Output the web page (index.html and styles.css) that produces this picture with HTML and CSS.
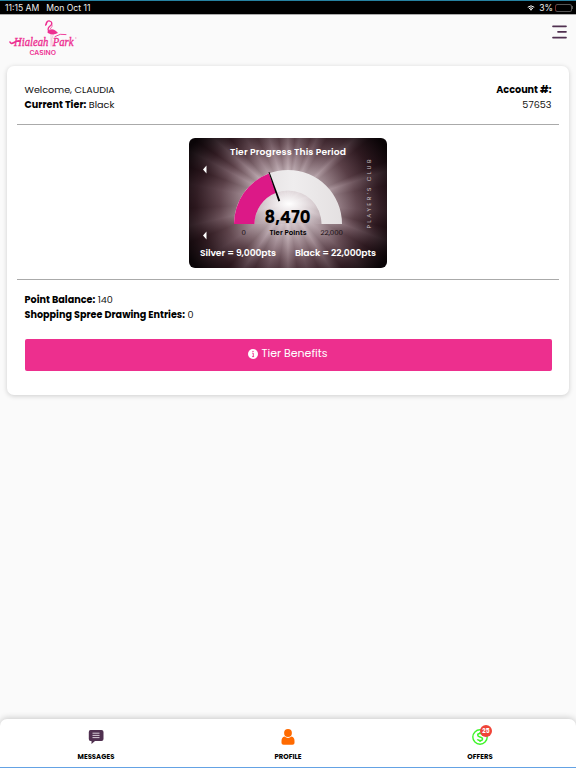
FILE: index.html
```html
<!DOCTYPE html>
<html lang="en">
<head>
  <meta charset="UTF-8">
  <meta name="viewport" content="width=device-width, initial-scale=1">
  <title>Hialeah Park Casino</title>
  <link rel="stylesheet" href="styles.css">
</head>
<body>

  <div class="status-bar">
    <span class="status-time">11:15 AM</span>
    <span class="status-date">Mon Oct 11</span>
    <svg class="wifi" viewBox="0 0 16 12">
      <path d="M1.5 4.5Q8-1.2 14.5 4.5M4 7.2Q8 3.8 12 7.2" fill="none" stroke="#fff" stroke-width="2"/>
      <path d="M5.6 8.7Q8 6.8 10.4 8.7L8 11.5z" fill="#fff"/>
    </svg>
    <span class="status-percent">3%</span>
    <span class="battery"></span>
  </div>

  <header>
    <svg class="logo" viewBox="0 0 70 38">
      <g fill="none" stroke="#ed2f91" stroke-linecap="round">
        <path d="M37 5.5Q37.500 1.500 40.500 2Q44 3 42 6.200Q38 8.800 39.500 12" stroke-width="1.3"/>
        <path d="M38 3.500L36.600 6.200" stroke-width="1.200"/>
        <path d="M43 4.500Q44.500 7 41 10.500" stroke-width=".7"/>
        <path d="M42 15V27M44.500 15L42.800 20L43.500 27" stroke-width=".5" stroke="#f58fc2"/>
        <path d="M1 23Q2 25.500 5 23.500T11 22" stroke-width="1.600"/>
        <path d="M46 17.500Q51 14 57 15.500" stroke-width=".9"/>
      </g>
      <path d="M39 12Q43 8.500 47 12L49 14Q44 16.500 40 14.500Q37.500 13.500 39 12z" fill="#ed2f91"/>
      <g fill="#ed2f91">
        <text class="logo-script" x="5" y="26.500" textLength="59.500" lengthAdjust="spacingAndGlyphs">Hialeah Park</text>
        <text class="logo-casino" x="20.500" y="36" textLength="26.500" lengthAdjust="spacingAndGlyphs">CASINO</text>
      </g>
      <circle cx="66.800" cy="19" r=".7" fill="#f59ac8"/>
    </svg>
    <svg class="menu-icon" viewBox="0 0 15 14">
      <path d="M1 1.300H14M6 6.800H14M1 12.600H14" fill="none" stroke="#503050" stroke-width="1.700" stroke-linecap="round"/>
    </svg>
  </header>

  <main class="card">
    <section class="account">
      <div>
        <div class="welcome">Welcome, CLAUDIA</div>
        <div class="tier"><strong>Current Tier:</strong> Black</div>
      </div>
      <div class="account-number">
        <strong>Account #:</strong>
        <div>57653</div>
      </div>
    </section>

    <hr>

    <div class="tier-card">
      <svg viewBox="0 0 198 130">
        <defs>
          <linearGradient id="arc" x1="0" x2="1">
            <stop offset="0" stop-color="#ddd9da"/>
            <stop offset=".55" stop-color="#efedee"/>
            <stop offset="1" stop-color="#e4e0e1"/>
          </linearGradient>
          <radialGradient id="dome" cx=".52" cy=".4" r=".7">
            <stop offset="0" stop-color="#fff" stop-opacity=".9"/>
            <stop offset=".5" stop-color="#e2dadd" stop-opacity=".6"/>
            <stop offset="1" stop-color="#b8a8ae" stop-opacity=".5"/>
          </radialGradient>
        </defs>
        <path d="M65.500 86A33.500 33.500 0 0 1 132.500 86z" fill="url(#dome)"/>
        <path d="M45 86A54 54 0 0 1 153 86H132.500A33.500 33.500 0 0 0 65.500 86z" fill="url(#arc)"/>
        <path d="M45 86A54 54 0 0 1 79.900 35.500L87.200 54.700A33.500 33.500 0 0 0 65.500 86z" fill="#dc1987"/>
        <path d="M79.500 34L80.600 34.200L91.200 62.800L89.400 63.400z" fill="#000"/>
        <path d="M14 31.500L17.500 27.500V35.500zM14 97.500L17.500 93.500V101.500z" fill="#fff"/>
        <g class="light">
          <text x="41" y="16.900" textLength="116">Tier Progress This Period</text>
          <text x="11" y="118" textLength="76">Silver = 9,000pts</text>
          <text x="106" y="118" textLength="81">Black = 22,000pts</text>
        </g>
        <text class="points" x="75.500" y="84.500" textLength="46" lengthAdjust="spacingAndGlyphs">8,470</text>
        <text class="points-label" x="80.500" y="96.500" textLength="37">Tier Points</text>
        <text class="scale" x="52.500" y="96.500">0</text>
        <text class="scale" x="131.500" y="96.500" textLength="22.500">22,000</text>
        <text class="club" transform="translate(181.500 90.500) rotate(-90)" textLength="69">PLAYER'S CLUB</text>
      </svg>
    </div>

    <hr>

    <section class="balance">
      <div class="point-row"><strong>Point Balance:</strong> 140</div>
      <div class="entries-row"><strong>Shopping Spree Drawing Entries:</strong> 0</div>
    </section>

    <button class="benefits">
      <svg viewBox="0 0 10 10">
        <circle cx="5" cy="5" r="5" fill="#fff"/>
        <path d="M4.200 4.200H5.300V7.500M4.100 7.600H6.100" fill="none" stroke="#ed2f8e" stroke-width=".9"/>
        <circle cx="5" cy="2.400" r=".7" fill="#ed2f8e"/>
      </svg>
      <span>Tier Benefits</span>
    </button>
  </main>

  <nav>
    <a class="nav-item">
      <svg viewBox="0 0 16 16">
        <path d="M2.500 1H13.500Q15.500 1 15.500 3V10Q15.500 12 13.500 12H7L3.500 15V12H2.500Q.8 12 .8 10V3Q.8 1 2.500 1z" fill="#503050"/>
        <path d="M4.500 4.200H11.500M4.500 6.400H11.500M4.500 8.600H11.500" stroke="#d8cdd8" stroke-width="1"/>
      </svg>
      <span class="label-messages">MESSAGES</span>
    </a>
    <a class="nav-item">
      <svg viewBox="0 0 16 16">
        <circle cx="8" cy="4" r="3.900" fill="#ff6a00"/>
        <path d="M4.500 7.500Q8 10.300 11.500 7.500Q14.500 8 14.500 12V14Q14.500 15.800 12.500 15.800H3.500Q1.500 15.800 1.500 14V12Q1.500 8 4.500 7.500z" fill="#ff6a00"/>
      </svg>
      <span class="label-profile">PROFILE</span>
    </a>
    <a class="nav-item">
      <div class="offer-icon">
        <svg viewBox="0 0 16 16">
          <circle cx="8" cy="8" r="7.200" fill="none" stroke="#3ff52a" stroke-width="1.400"/>
          <path d="M10.500 5.600Q10 4.500 8 4.500Q5.700 4.500 5.700 6.100Q5.700 7.500 8 8Q10.500 8.500 10.500 10Q10.500 11.600 8 11.600Q5.900 11.600 5.400 10.300M8 3V4.500M8 11.600V13" fill="none" stroke="#3ff52a" stroke-width="1.500"/>
        </svg>
        <span class="badge">25</span>
      </div>
      <span class="label-offers">OFFERS</span>
    </a>
  </nav>

</body>
</html>
```
FILE: styles.css
```css
* {
  box-sizing: border-box;
}

body {
  margin: 0;
  height: 768px;
  display: flex;
  flex-direction: column;
  overflow: hidden;
  background-color: #fafafa;
  color: #111;
  font-family: Poppins, Inter, sans-serif;
  font-size: 9.65px;
}

strong {
  font-weight: 700;
  color: #000;
}

.status-bar {
  height: 15px;
  display: flex;
  align-items: center;
  padding: 0 3px 0 5px;
  background-color: #000;
  border-top: 1px solid #2681a0;
  border-bottom: 1px solid #aaa;
  color: #eee;
  font-family: Inter, sans-serif;
  font-size: 8.6px;
}

.status-date {
  margin-left: 7px;
  flex: 1;
}

.wifi {
  width: 8px;
  height: 6px;
  margin-right: 4px;
}

.battery {
  width: 17px;
  height: 8px;
  margin: 0 1px 0 2px;
  border: 1px solid #555;
  border-left-color: #76302d;
  border-radius: 2.5px;
}

.battery::after {
  content: "";
  display: block;
  width: 1px;
  height: 3px;
  margin: 1.5px 0 0 16px;
  background-color: #555;
}

header {
  height: 51px;
  display: flex;
  justify-content: space-between;
  padding: 4px 9px 0;
}

.logo {
  width: 70px;
  height: 38px;
}

.logo-script {
  font: italic 12px "Liberation Serif", serif;
  stroke: #ed2f91;
  stroke-width: 0.35px;
  word-spacing: 2px;
}

.logo-casino {
  font: 600 5.8px Inter, sans-serif;
}

.menu-icon {
  width: 15px;
  height: 14px;
  margin-top: 6px;
}

.card {
  height: 329px;
  margin: 0 7px;
  padding: 17px 10px 0;
  background-color: #fff;
  border-radius: 7px;
  box-shadow: 0 1px 5px rgba(0, 0, 0, 0.18);
}

.account {
  height: 41px;
  display: flex;
  justify-content: space-between;
  padding: 0 7.5px;
  line-height: 14.5px;
}

.account-number {
  text-align: right;
}

hr {
  height: 1px;
  margin: 0;
  border: none;
  background-color: #aaa;
}

.tier-card {
  width: 198px;
  height: 130px;
  margin: 12.5px auto 11.5px;
  border-radius: 6px;
  overflow: hidden;
  background:
    radial-gradient(ellipse 118px 100px at 50% 50%, #fff 0, rgba(230, 218, 222, 0.8) 22%, rgba(165, 143, 150, 0.65) 44%, rgba(100, 74, 82, 0.6) 58%, rgba(32, 14, 20, 0.7) 78%, rgba(5, 1, 3, 0.94) 100%),
    conic-gradient(from 0deg at 50% 50%, #b9a5ab 0deg, #6b4f58 6deg, #96818a 10deg, #54383f 19deg, #8a727b 24deg, #4a2f37 31deg, #705861 42deg, #a08a92 46deg, #533840 52deg, #42272f 67deg, #8b747c 72deg, #4d333b 80deg, #6a515a 95deg, #42282f 104deg, #8f7881 111deg, #4a3038 119deg, #775f68 131deg, #503740 140deg, #9c868e 147deg, #53383f 155deg, #7e656e 164deg, #5a3e47 172deg, #ac979e 180deg, #5c424b 188deg, #88707a 197deg, #4d343c 207deg, #96808a 214deg, #43292f 223deg, #705860 236deg, #43292f 248deg, #826a72 257deg, #472c34 267deg, #664c55 281deg, #3f252c 290deg, #8b737c 298deg, #53373f 304deg, #a58f98 311deg, #4d333b 318deg, #846b74 327deg, #53383f 335deg, #a38d96 344deg, #5d424a 352deg, #b9a5ab 360deg);
}

.tier-card svg {
  display: block;
  width: 198px;
  height: 130px;
}

.light {
  fill: #fff;
  font-size: 9.2px;
  font-weight: 600;
}

.points {
  font-size: 17px;
  font-weight: 700;
}

.points-label {
  font-size: 7px;
  font-weight: 600;
}

.scale {
  font-size: 7px;
  fill: #150c0f;
}

.club {
  font-size: 5.8px;
  fill: #d0c5c8;
}

.balance {
  padding: 13px 7.5px 0;
  line-height: 14.5px;
}

.benefits {
  width: 527px;
  height: 32px;
  display: flex;
  align-items: center;
  justify-content: center;
  gap: 3px;
  margin: 17px 0 0 7.5px;
  padding: 0 0 3px;
  background-color: #ed2f8e;
  color: #fff;
  border: none;
  border-radius: 2px;
  font-family: inherit;
  font-size: 11px;
}

.benefits svg {
  width: 10px;
  height: 10px;
}

nav {
  height: 49px;
  display: grid;
  grid-template-columns: repeat(3, 1fr);
  margin-top: auto;
  background-color: #fff;
  border-bottom: 1px solid #64a2e4;
  box-shadow: 0 -1px 6px rgba(0, 0, 0, 0.2);
}

.nav-item {
  display: flex;
  flex-direction: column;
  align-items: center;
  padding-top: 10px;
  color: #000;
  font-size: 6.9px;
  font-weight: 700;
  line-height: 8px;
}

.nav-item svg {
  display: block;
  width: 16px;
  height: 16px;
}

.nav-item > span {
  margin-top: 8px;
}

.offer-icon {
  position: relative;
}

.badge {
  position: absolute;
  left: 8px;
  top: -4px;
  width: 12px;
  height: 12px;
  border-radius: 50%;
  background-color: #f04438;
  color: #fff;
  font-size: 6px;
  line-height: 12px;
  text-align: center;
}

nav {
  border-radius: 7px 7px 0 0;
}
```
